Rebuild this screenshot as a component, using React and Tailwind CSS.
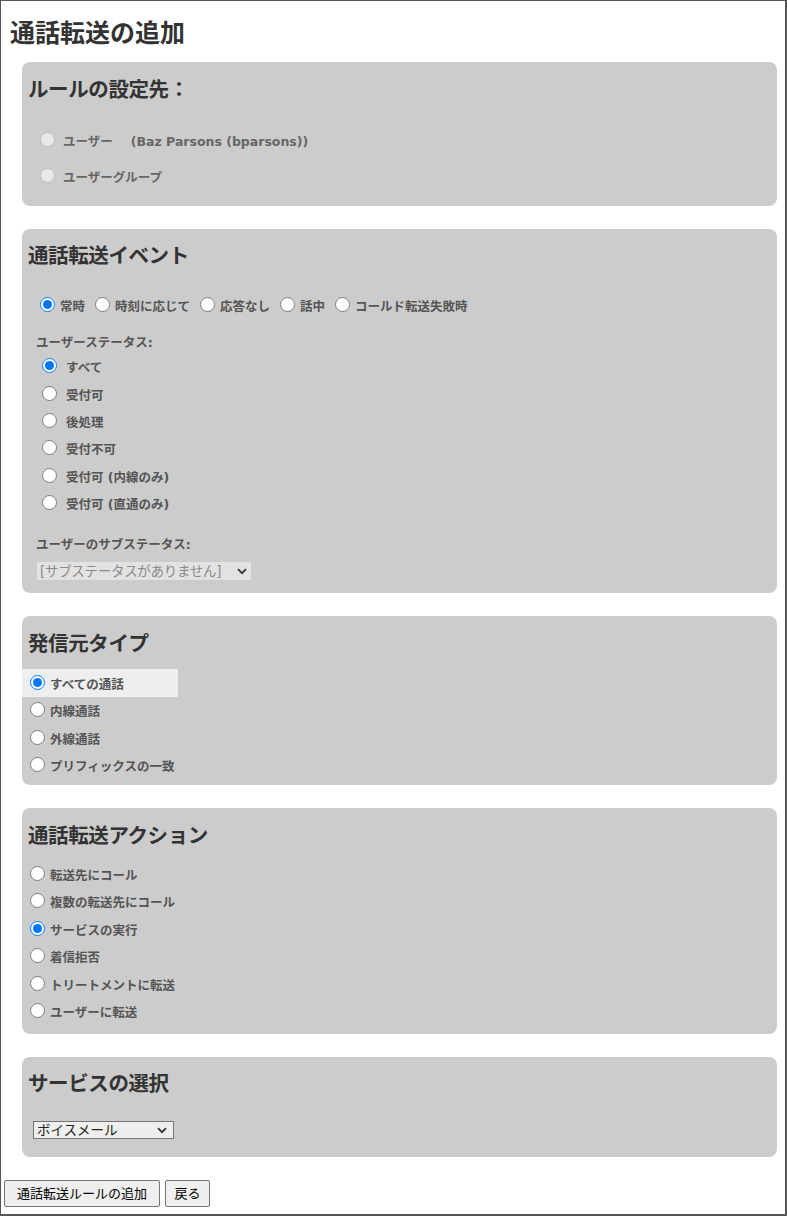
import React from "react";

const font = "font-['DejaVu_Sans','Noto_Sans_CJK_JP',sans-serif]";

const Radio = ({ checked, disabled, name }) => (
  <input
    type="radio"
    name={name}
    defaultChecked={checked}
    disabled={disabled}
    className="m-0 w-[15px] h-[15px] shrink-0 relative -top-[1px]"
  />
);

const Label = ({ children, className = "" }) => (
  <span className={`relative top-[2px] ${className}`}>{children}</span>
);

const Heading = ({ children }) => (
  <h2 className="text-[20.5px] leading-[24px] font-bold text-[#333] pl-[6px] tracking-[-0.4px]">
    {children}
  </h2>
);

const Panel = ({ className, children }) => (
  <div className={`w-[755px] bg-[#cccccc] rounded-[8px] ${className}`}>{children}</div>
);

const Chevron = () => (
  <svg width="10" height="7" viewBox="0 0 10 7" className="shrink-0">
    <path d="M1 1.2 5 5.2 9 1.2" fill="none" stroke="#333" strokeWidth="1.8" />
  </svg>
);

const statuses = ["すべて", "受付可", "後処理", "受付不可", "受付可 (内線のみ)", "受付可 (直通のみ)"];
const sourceTypes = ["すべての通話", "内線通話", "外線通話", "プリフィックスの一致"];
const actions = [
  "転送先にコール",
  "複数の転送先にコール",
  "サービスの実行",
  "着信拒否",
  "トリートメントに転送",
  "ユーザーに転送",
];
const events = ["常時", "時刻に応じて", "応答なし", "話中", "コールド転送失敗時"];

export default function App() {
  return (
    <div
      className={`w-[787px] h-[1216px] bg-white border-l border-t border-r-2 border-b-2 border-[#555] ${font}`}
    >
      <h1 className="mt-[18px] pl-[9px] text-[25px] leading-[30px] font-bold text-[#333]">
        通話転送の追加
      </h1>

      <div className="ml-[21px] flex flex-col gap-[23px] mt-[13px]">
        {/* Rule target */}
        <Panel className="pt-[16px] pb-[16px]">
          <Heading>ルールの設定先：</Heading>
          <div className="mt-[24px] flex flex-col gap-[8px] pl-[18px] text-[12.5px] font-bold text-[#666]">
            <label className="h-[28px] flex items-center gap-[8px]">
              <Radio name="target" disabled />
              <Label>ユーザー</Label>
              <Label className="ml-[10px]">(Baz Parsons (bparsons))</Label>
            </label>
            <label className="h-[28px] flex items-center gap-[8px]">
              <Radio name="target" disabled />
              <Label>ユーザーグループ</Label>
            </label>
          </div>
        </Panel>

        {/* Events */}
        <Panel className="pt-[15px] pb-[13px]">
          <Heading>通話転送イベント</Heading>
          <div className="mt-[27px] h-[20px] pl-[18px] flex items-center gap-[10px] text-[12.5px] font-bold text-[#555]">
            {events.map((e, i) => (
              <label key={e} className="flex items-center gap-[5px]">
                <Radio name="event" checked={i === 0} />
                <Label>{e}</Label>
              </label>
            ))}
          </div>
          <div className="mt-[18px] h-[20px] leading-[20px] pl-[14px] text-[12.5px] font-bold text-[#555]">
            ユーザーステータス:
          </div>
          <div className="pl-[20px] flex flex-col text-[12.5px] font-bold text-[#555]">
            {statuses.map((s, i) => (
              <label key={s} className="h-[27.4px] flex items-center gap-[9px]">
                <Radio name="status" checked={i === 0} />
                <Label>{s}</Label>
              </label>
            ))}
          </div>
          <div className="mt-[18px] h-[20px] leading-[20px] pl-[14px] text-[12.5px] font-bold text-[#555]">
            ユーザーのサブステータス:
          </div>
          <div className="mt-[7px] ml-[15px] w-[214px] h-[18px] bg-[#e2e2e2] flex items-center justify-between pl-[3px] pr-[4px] text-[13.5px] text-[#8a8a8a]">
            <span className="leading-[18px] tracking-[-0.3px]">[サブステータスがありません]</span>
            <Chevron />
          </div>
        </Panel>

        {/* Source type */}
        <Panel className="pt-[16px] pb-[6px]">
          <Heading>発信元タイプ</Heading>
          <div className="mt-[13px] flex flex-col text-[12.5px] font-bold text-[#555]">
            {sourceTypes.map((s, i) => (
              <label
                key={s}
                className={`h-[27.5px] flex items-center gap-[5px] pl-[8px] ${
                  i === 0 ? "w-[156px] bg-[#eeeeee]" : ""
                }`}
              >
                <Radio name="source" checked={i === 0} />
                <Label>{s}</Label>
              </label>
            ))}
          </div>
        </Panel>

        {/* Actions */}
        <Panel className="pt-[16px] pb-[9px]">
          <Heading>通話転送アクション</Heading>
          <div className="mt-[12px] flex flex-col text-[12.5px] font-bold text-[#555]">
            {actions.map((a, i) => (
              <label key={a} className="h-[27.5px] flex items-center gap-[5px] pl-[8px]">
                <Radio name="action" checked={i === 2} />
                <Label>{a}</Label>
              </label>
            ))}
          </div>
        </Panel>

        {/* Service */}
        <Panel className="pt-[15px] pb-[18px]">
          <Heading>サービスの選択</Heading>
          <div className="mt-[25px] ml-[11px] w-[141px] h-[18px] bg-[#efefef] border border-[#767676] flex items-center justify-between pl-[3px] pr-[6px] text-[13.5px] text-[#222]">
            <span className="leading-[16px]">ボイスメール</span>
            <Chevron />
          </div>
        </Panel>
      </div>

      <div className="mt-[23px] ml-[3px] flex gap-[5px] text-[13px] text-black">
        <button className="w-[156px] h-[27px] bg-[#efefef] border border-[#767676] rounded-[2px] flex items-center justify-center">
          通話転送ルールの追加
        </button>
        <button className="w-[45px] h-[27px] bg-[#efefef] border border-[#767676] rounded-[2px] flex items-center justify-center">
          戻る
        </button>
      </div>
    </div>
  );
}
